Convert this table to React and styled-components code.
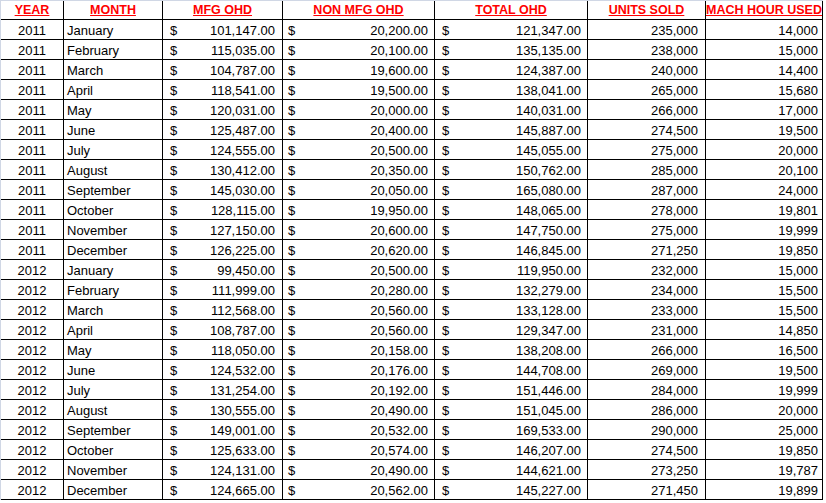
import React from "react";
import styled, { createGlobalStyle } from "styled-components";

const rows = [
  [2011, "January", 101147, 20200, 235000, 14000],
  [2011, "February", 115035, 20100, 238000, 15000],
  [2011, "March", 104787, 19600, 240000, 14400],
  [2011, "April", 118541, 19500, 265000, 15680],
  [2011, "May", 120031, 20000, 266000, 17000],
  [2011, "June", 125487, 20400, 274500, 19500],
  [2011, "July", 124555, 20500, 275000, 20000],
  [2011, "August", 130412, 20350, 285000, 20100],
  [2011, "September", 145030, 20050, 287000, 24000],
  [2011, "October", 128115, 19950, 278000, 19801],
  [2011, "November", 127150, 20600, 275000, 19999],
  [2011, "December", 126225, 20620, 271250, 19850],
  [2012, "January", 99450, 20500, 232000, 15000],
  [2012, "February", 111999, 20280, 234000, 15500],
  [2012, "March", 112568, 20560, 233000, 15500],
  [2012, "April", 108787, 20560, 231000, 14850],
  [2012, "May", 118050, 20158, 266000, 16500],
  [2012, "June", 124532, 20176, 269000, 19500],
  [2012, "July", 131254, 20192, 284000, 19999],
  [2012, "August", 130555, 20490, 286000, 20000],
  [2012, "September", 149001, 20532, 290000, 25000],
  [2012, "October", 125633, 20574, 274500, 19850],
  [2012, "November", 124131, 20490, 273250, 19787],
  [2012, "December", 124665, 20562, 271450, 19899],
];

const columns = [
  { title: "YEAR", width: 63 },
  { title: "MONTH", width: 99 },
  { title: "MFG OHD", width: 120 },
  { title: "NON MFG OHD", width: 152 },
  { title: "TOTAL OHD", width: 153 },
  { title: "UNITS SOLD", width: 118 },
  { title: "MACH HOUR USED", width: 117 },
];

const money = (n) =>
  n.toLocaleString("en-US", { minimumFractionDigits: 2, maximumFractionDigits: 2 });
const whole = (n) => n.toLocaleString("en-US");

const GlobalStyle = createGlobalStyle`
  body {
    margin: 0;
    background: #ffffff;
    font-family: "Liberation Sans", Arial, sans-serif;
  }
`;

const Sheet = styled.table`
  width: 823px;
  table-layout: fixed;
  border-collapse: separate;
  border-spacing: 0;
  border-top: 1px solid #d0d7e5;
  border-left: 1px solid #d0d7e5;
  color: #000;
  font-size: 13px;
`;

const HeadRow = styled.tr`
  height: 19px;
`;

const Row = styled.tr`
  height: 20px;
`;

const Cell = styled.td`
  padding: 0 ${(p) => p.$pad || 0}px 0 ${(p) => p.$padLeft || 0}px;
  border-right: 1px solid #000;
  border-bottom: 1px solid #000;
  line-height: 16px;
  vertical-align: bottom;
  white-space: nowrap;
  overflow: hidden;
  text-align: ${(p) => p.$align || "left"};
`;

const HeadCell = styled.th`
  padding: 0;
  border-right: 1px solid #000;
  border-bottom: 1px solid #000;
  line-height: 18px;
  font-size: 12.5px;
  font-weight: bold;
  color: #ff0000;
  text-decoration: underline;
  white-space: nowrap;
  text-align: center;
  vertical-align: bottom;
`;

const Amount = styled.div`
  display: flex;
  justify-content: space-between;
  padding: 0 ${(p) => p.$right}px 0 ${(p) => p.$left}px;
`;

export default function App() {
  return (
    <>
      <GlobalStyle />
      <Sheet>
        <colgroup>
          {columns.map((c) => (
            <col key={c.title} style={{ width: c.width }} />
          ))}
        </colgroup>
        <thead>
          <HeadRow>
            {columns.map((c) => (
              <HeadCell key={c.title}>{c.title}</HeadCell>
            ))}
          </HeadRow>
        </thead>
        <tbody>
          {rows.map(([year, month, mfg, nonMfg, units, hours]) => (
            <Row key={year + month}>
              <Cell $align="center">{year}</Cell>
              <Cell $padLeft={3}>{month}</Cell>
              <Cell>
                <Amount $left={7} $right={7}>
                  <span>$</span>
                  <span>{money(mfg)}</span>
                </Amount>
              </Cell>
              <Cell>
                <Amount $left={5} $right={6}>
                  <span>$</span>
                  <span>{money(nonMfg)}</span>
                </Amount>
              </Cell>
              <Cell>
                <Amount $left={7} $right={6}>
                  <span>$</span>
                  <span>{money(mfg + nonMfg)}</span>
                </Amount>
              </Cell>
              <Cell $align="right" $pad={7}>{whole(units)}</Cell>
              <Cell $align="right" $pad={4}>{whole(hours)}</Cell>
            </Row>
          ))}
        </tbody>
      </Sheet>
    </>
  );
}
